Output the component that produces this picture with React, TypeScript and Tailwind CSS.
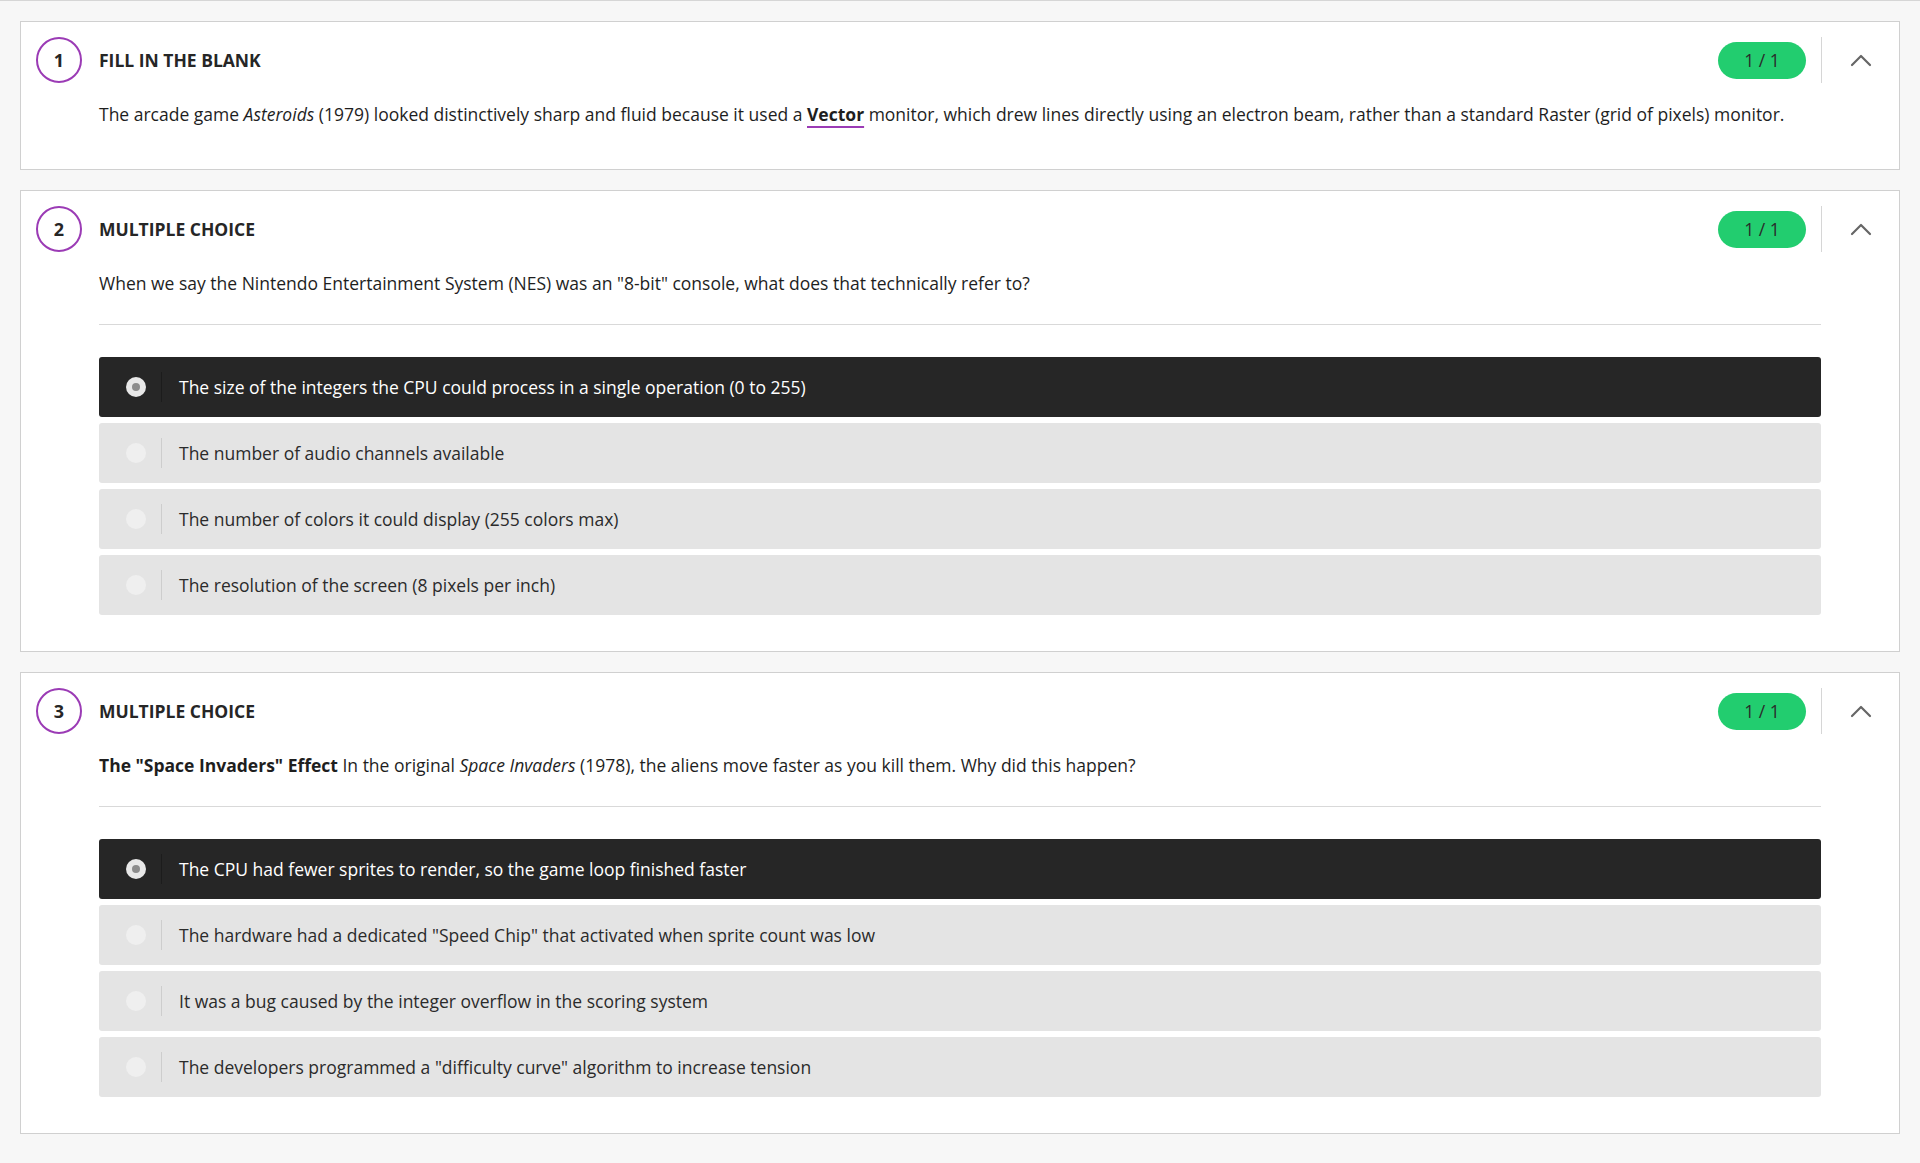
import React from 'react';

interface Option {
  text: string;
  selected?: boolean;
}

interface Question {
  num: number;
  kind: string;
  score: string;
  body: React.ReactNode;
  options?: Option[];
}

const Chevron: React.FC = () => (
  <svg width="22" height="14" viewBox="0 0 22 14" fill="none">
    <polyline points="2,12 11,3 20,12" stroke="#666666" strokeWidth="2.2" strokeLinecap="round" strokeLinejoin="round" />
  </svg>
);

const OptionRow: React.FC<{ option: Option }> = ({ option }) => {
  const dark = option.selected;
  return (
    <div
      className={
        dark
          ? 'h-[60px] rounded-[3px] bg-[#262626] flex items-center pl-[27px]'
          : 'h-[60px] rounded-[3px] bg-[#e4e4e4] flex items-center pl-[27px]'
      }
    >
      {dark ? (
        <div className="w-5 h-5 rounded-full bg-[#e8e8e8] flex items-center justify-center">
          <div className="w-2 h-2 rounded-full bg-[#8c8c8c]" />
        </div>
      ) : (
        <div className="w-5 h-5 rounded-full bg-[#efefef]" />
      )}
      <div className={dark ? 'ml-[15px] w-px h-[30px] bg-[#1c1c1c]' : 'ml-[15px] w-px h-[30px] bg-[#cdcdcd]'} />
      <span className={dark ? 'ml-[17px] text-[17.5px] text-white' : 'ml-[17px] text-[17.5px] text-[#2b2b2b]'}>
        {option.text}
      </span>
    </div>
  );
};

const QuestionCard: React.FC<{ q: Question }> = ({ q }) => (
  <div className={q.options ? 'border border-[#d0d0d0] bg-white flex pt-[15px] pl-[15px] pb-[36px]' : 'border border-[#d0d0d0] bg-white flex pt-[15px] pl-[15px] pb-[43px]'}>
    <div className="w-[46px] h-[46px] shrink-0 rounded-full border-2 border-[#9b3bb5] flex items-center justify-center text-[18px] font-bold text-[#262626]">
      {q.num}
    </div>
    <div className="flex-1 ml-[17px] min-w-0">
      <div className="h-[46px] flex items-center justify-between">
        <span className="text-[17.5px] font-bold text-[#262626] uppercase">{q.kind}</span>
        <span className="mr-[15px] w-[88px] h-[37px] rounded-full bg-[#22cd6f] flex items-center justify-center text-[17.5px] text-[#2a2a2a]">
          {q.score}
        </span>
      </div>
      <div className="mt-[19px] text-[17.5px] leading-[24px] text-[#1e1e1e]">{q.body}</div>
      {q.options && (
        <>
          <div className="mt-[29px] h-px bg-[#d9d9d9]" />
          <div className="mt-8 flex flex-col gap-[6px]">
            {q.options.map((o) => (
              <OptionRow key={o.text} option={o} />
            ))}
          </div>
        </>
      )}
    </div>
    <div className="w-[78px] shrink-0">
      <div className="h-[46px] border-l border-[#d6d6d6] flex items-center justify-center">
        <Chevron />
      </div>
    </div>
  </div>
);

export default function App() {
  const questions: Question[] = [
    {
      num: 1,
      kind: 'Fill in the blank',
      score: '1 / 1',
      body: (
        <>
          The arcade game <i>Asteroids</i> (1979) looked distinctively sharp and fluid because it used a{' '}
          <b className="underline decoration-[#9b3bb5] decoration-2 underline-offset-[5px]">Vector</b> monitor, which drew
          lines directly using an electron beam, rather than a standard Raster (grid of pixels) monitor.
        </>
      ),
    },
    {
      num: 2,
      kind: 'Multiple choice',
      score: '1 / 1',
      body: <>When we say the Nintendo Entertainment System (NES) was an "8-bit" console, what does that technically refer to?</>,
      options: [
        { text: 'The size of the integers the CPU could process in a single operation (0 to 255)', selected: true },
        { text: 'The number of audio channels available' },
        { text: 'The number of colors it could display (255 colors max)' },
        { text: 'The resolution of the screen (8 pixels per inch)' },
      ],
    },
    {
      num: 3,
      kind: 'Multiple choice',
      score: '1 / 1',
      body: (
        <>
          <b>The "Space Invaders" Effect</b> In the original <i>Space Invaders</i> (1978), the aliens move faster as you
          kill them. Why did this happen?
        </>
      ),
      options: [
        { text: 'The CPU had fewer sprites to render, so the game loop finished faster', selected: true },
        { text: 'The hardware had a dedicated "Speed Chip" that activated when sprite count was low' },
        { text: 'It was a bug caused by the integer overflow in the scoring system' },
        { text: 'The developers programmed a "difficulty curve" algorithm to increase tension' },
      ],
    },
  ];

  return (
    <div className="min-h-screen bg-[#f7f7f7] border-t border-[#d6d6d6] px-5 pt-5 pb-8 flex flex-col gap-5 font-['Open_Sans',sans-serif]">
      {questions.map((q) => (
        <QuestionCard key={q.num} q={q} />
      ))}
    </div>
  );
}
